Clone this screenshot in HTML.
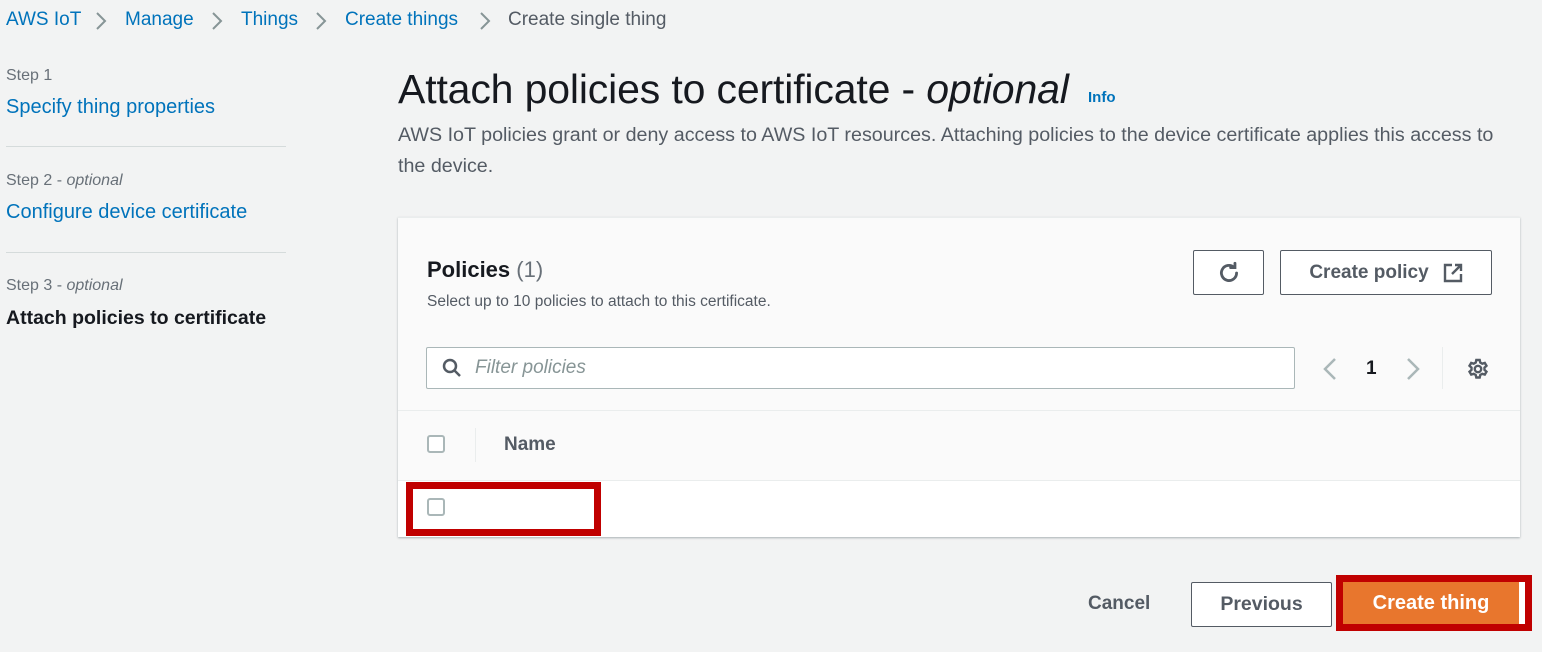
<!DOCTYPE html>
<html><head><meta charset="utf-8"><style>
*{margin:0;padding:0;box-sizing:border-box}
body{width:1542px;height:652px;background:#f2f3f3;font-family:"Liberation Sans",sans-serif;position:relative;overflow:hidden;color:#16191f}
.a{position:absolute;white-space:nowrap}
.bc{top:9px;font-size:19px;color:#0073bb}
.step{font-size:16px;color:#687078}
.lnk{font-size:20px;color:#0073bb}
.hr{position:absolute;left:6px;width:280px;height:1px;background:#d5dbdb}
.btn{position:absolute;border:1px solid #545b64;border-radius:2px;background:#fff;font-weight:bold;color:#545b64;font-size:19px;display:flex;align-items:center;justify-content:center}
.cb{position:absolute;width:18px;height:18px;border:2px solid #aab7b8;border-radius:3px;background:#fff}
.ch{position:absolute;top:11px}
</style></head><body>
<div class="a bc" style="left:6px">AWS IoT</div>
<svg class="ch" style="left:95px" width="12" height="20" viewBox="0 0 12 20" fill="none" stroke="#879596" stroke-width="2"><path d="M2 2l8 8-8 8"/></svg>
<div class="a bc" style="left:125px">Manage</div>
<svg class="ch" style="left:211px" width="12" height="20" viewBox="0 0 12 20" fill="none" stroke="#879596" stroke-width="2"><path d="M2 2l8 8-8 8"/></svg>
<div class="a bc" style="left:241px">Things</div>
<svg class="ch" style="left:315px" width="12" height="20" viewBox="0 0 12 20" fill="none" stroke="#879596" stroke-width="2"><path d="M2 2l8 8-8 8"/></svg>
<div class="a bc" style="left:345px">Create things</div>
<svg class="ch" style="left:479px" width="12" height="20" viewBox="0 0 12 20" fill="none" stroke="#879596" stroke-width="2"><path d="M2 2l8 8-8 8"/></svg>
<div class="a bc" style="left:508px;color:#545b64">Create single thing</div>

<div class="a step" style="left:6px;top:67px">Step 1</div>
<div class="a lnk" style="left:6px;top:96px">Specify thing properties</div>
<div class="hr" style="top:146px"></div>
<div class="a step" style="left:6px;top:172px">Step 2 - <i>optional</i></div>
<div class="a lnk" style="left:6px;top:201px">Configure device certificate</div>
<div class="hr" style="top:252px"></div>
<div class="a step" style="left:6px;top:277px">Step 3 - <i>optional</i></div>
<div class="a" style="left:6px;top:307px;font-size:19.5px;font-weight:bold">Attach policies to certificate</div>

<div class="a" style="left:398px;top:66px;font-size:41px;letter-spacing:-0.15px">Attach policies to certificate - <i>optional</i></div>
<div class="a" style="left:1088px;top:89px;font-size:15px;font-weight:bold;color:#0073bb">Info</div>
<div class="a" style="left:398px;top:124px;font-size:19.7px;color:#545b64">AWS IoT policies grant or deny access to AWS IoT resources. Attaching policies to the device certificate applies this access to</div>
<div class="a" style="left:398px;top:155px;font-size:19.7px;color:#545b64">the device.</div>

<div style="position:absolute;left:398px;top:217px;width:1122px;height:320px;background:#fafafa;box-shadow:0 1px 2px rgba(0,28,36,.3);border-top:1px solid #eaeded"></div>
<div style="position:absolute;left:398px;top:410px;width:1122px;height:1px;background:#eaeded"></div>
<div style="position:absolute;left:398px;top:480px;width:1122px;height:57px;background:#fff;border-top:1px solid #eaeded"></div>
<div class="a" style="left:427px;top:257px;font-size:22px;font-weight:bold">Policies <span style="font-weight:normal;color:#687078">(1)</span></div>
<div class="a" style="left:427px;top:293px;font-size:15.5px;color:#545b64">Select up to 10 policies to attach to this certificate.</div>
<div class="btn" style="left:1193px;top:250px;width:71px;height:45px"><svg width="26" height="26" viewBox="0 0 24 24" fill="none" stroke="#545b64" stroke-width="2.6" stroke-linecap="round"><path d="M19 12a7 7 0 1 1-2.5-5.4"/><path d="M17.5 3v4h-4"/></svg></div>
<div class="btn" style="left:1280px;top:250px;width:212px;height:45px">Create policy<svg style="margin-left:14px" width="20" height="20" viewBox="0 0 20 20" fill="none" stroke="#545b64" stroke-width="2.4"><path d="M9 2H2v16h16v-7"/><path d="M12 2h6v6M18 2l-9 9"/></svg></div>
<div style="position:absolute;left:426px;top:347px;width:869px;height:42px;background:#fff;border:1px solid #aab7b8;border-radius:2px"></div>
<svg class="a" style="left:442px;top:358px" width="20" height="20" viewBox="0 0 20 20" fill="none" stroke="#545b64" stroke-width="2.5"><circle cx="8" cy="8" r="6"/><path d="M12.5 12.5l5.5 5.5"/></svg>
<div class="a" style="left:475px;top:357px;font-size:19px;font-style:italic;color:#879596">Filter policies</div>
<svg class="a" style="left:1322px;top:357px" width="16" height="24" viewBox="0 0 16 24" fill="none" stroke="#aab7b8" stroke-width="2.5"><path d="M13 2L3 12l10 10"/></svg>
<div class="a" style="left:1366px;top:358px;font-size:19px;font-weight:bold">1</div>
<svg class="a" style="left:1405px;top:357px" width="16" height="24" viewBox="0 0 16 24" fill="none" stroke="#aab7b8" stroke-width="2.5"><path d="M3 2l10 10L3 22"/></svg>
<div style="position:absolute;left:1442px;top:347px;width:1px;height:42px;background:#eaeded"></div>
<svg class="a" style="left:1466px;top:357px" width="24" height="24" viewBox="0 0 24 24" fill="none" stroke="#545b64" stroke-width="2.4"><circle cx="12" cy="12" r="3.2"/><path d="M10.3 3h3.4l.6 2.6 2 1.1 2.5-.8 1.7 2.9-2 1.8v2.3l2 1.8-1.7 2.9-2.5-.8-2 1.1-.6 2.6h-3.4l-.6-2.6-2-1.1-2.5.8-1.7-2.9 2-1.8v-2.3l-2-1.8 1.7-2.9 2.5.8 2-1.1z"/></svg>
<div class="cb" style="left:427px;top:435px"></div>
<div style="position:absolute;left:475px;top:428px;width:1px;height:34px;background:#eaeded"></div>
<div class="a" style="left:504px;top:434px;font-size:19px;font-weight:bold;color:#545b64">Name</div>
<div class="cb" style="left:427px;top:498px"></div>
<div style="position:absolute;left:406px;top:482px;width:195px;height:54px;border:7px solid #c00000"></div>

<div class="a" style="left:1088px;top:593px;font-size:19px;font-weight:bold;color:#545b64">Cancel</div>
<div class="btn" style="left:1191px;top:582px;width:141px;height:45px;font-size:19.5px">Previous</div>
<div style="position:absolute;left:1336px;top:575px;width:196px;height:56px;border:7px solid #c00000;background:#fff"></div>
<div class="a" style="left:1343px;top:582px;width:176px;height:42px;background:#e8762d;color:#fff;font-size:20px;font-weight:bold;display:flex;align-items:center;justify-content:center">Create thing</div>
</body></html>
